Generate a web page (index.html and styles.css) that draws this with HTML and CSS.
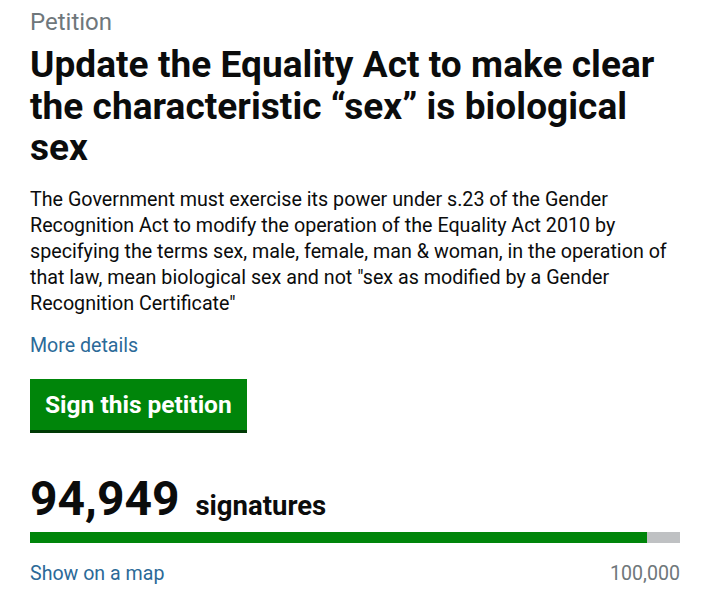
FILE: index.html
```html
<!DOCTYPE html>
<html lang="en">
<head>
<meta charset="utf-8">
<title>Petition</title>
<link rel="stylesheet" href="styles.css">
</head>
<body>
<main class="page">
  <p class="kicker">Petition</p>
  <h1 class="title">Update the Equality Act to make clear the characteristic “sex” is biological sex</h1>
  <p class="summary">The Government must exercise its power under s.23 of the Gender Recognition Act to modify the operation of the Equality Act 2010 by specifying the terms sex, male, female, man &amp; woman, in the operation of that law, mean biological sex and not "sex as modified by a Gender Recognition Certificate"</p>
  <a class="link more" href="#">More details</a>
  <a class="button" href="#">Sign this petition</a>
  <p class="count"><span class="count-num">94,949</span> <span class="count-label">signatures</span></p>
  <div class="progress"><div class="progress-fill" style="width: 94.949%"></div></div>
  <div class="progress-meta">
    <a class="link" href="#">Show on a map</a>
    <span class="target">100,000</span>
  </div>
</main>
</body>
</html>
```
FILE: styles.css
```css
* { box-sizing: border-box; }
html, body { margin: 0; padding: 0; background: #fff; }
body {
  font-family: Roboto, "Noto Sans", sans-serif;
  color: #0b0c0c;
}
.page {
  padding: 7px 26px 0 30px;
  display: flex;
  flex-direction: column;
  align-items: flex-start;
}
.kicker {
  margin: 0;
  font-size: 24px;
  line-height: 30px;
  color: #6f777b;
}
.title {
  margin: 7px 0 0;
  font-size: 37px;
  line-height: 41.5px;
  font-weight: 700;
  letter-spacing: 0.05px;
}
.summary {
  margin: 18px 0 0;
  font-size: 19.7px;
  line-height: 26px;
}
.link {
  color: #2b6a98;
  text-decoration: none;
  font-size: 19.6px;
  line-height: 26px;
}
.more { margin-top: 16px; }
.button {
  margin-top: 20px;
  display: inline-block;
  background: #00850a;
  color: #fff;
  text-decoration: none;
  font-weight: 700;
  font-size: 24.5px;
  line-height: 51px;
  padding: 0 15px;
  border-bottom: 3px solid #003a05;
}
.count {
  margin: 38px 0 0;
  font-size: 48px;
  line-height: 56px;
}
.count-num {
  font-weight: 700;
}
.count-label {
  font-size: 27.5px;
  line-height: 1;
  font-weight: 700;
  margin-left: 4px;
}
.progress {
  margin-top: 5px;
  width: 100%;
  height: 11px;
  background: #bfc1c3;
}
.progress-fill {
  height: 100%;
  background: #00850a;
}
.progress-meta {
  margin-top: 18px;
  width: 100%;
  display: flex;
  justify-content: space-between;
  align-items: baseline;
}
.target {
  font-size: 19.6px;
  line-height: 26px;
  color: #6f777b;
}
```
